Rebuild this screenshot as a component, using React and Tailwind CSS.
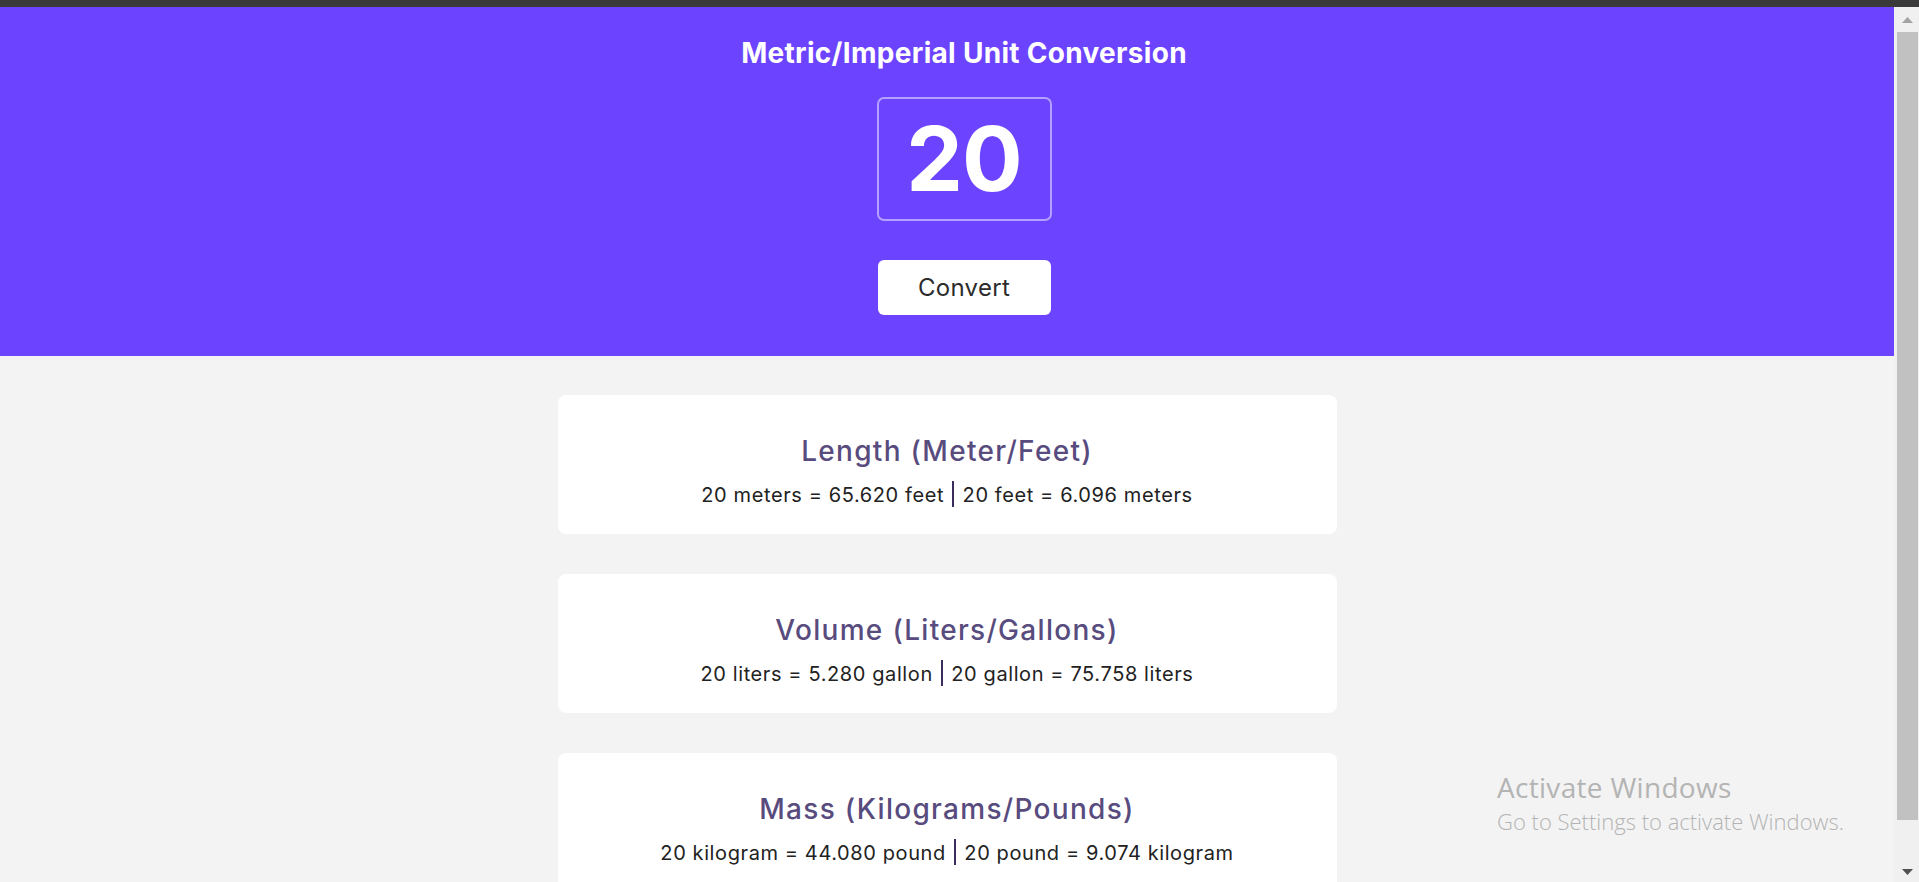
import React from "react";

const cards = [
  {
    title: "Length (Meter/Feet)",
    a: "20 meters = 65.620 feet",
    b: "20 feet = 6.096 meters",
  },
  {
    title: "Volume (Liters/Gallons)",
    a: "20 liters = 5.280 gallon",
    b: "20 gallon = 75.758 liters",
  },
  {
    title: "Mass (Kilograms/Pounds)",
    a: "20 kilogram = 44.080 pound",
    b: "20 pound = 9.074 kilogram",
  },
];

export default function App() {
  return (
    <div
      className="relative h-[882px] w-full overflow-hidden bg-[#f3f3f3] flex flex-col"
      style={{ fontFamily: "Inter, 'Noto Sans', sans-serif" }}
    >
      <div className="h-[7px] w-full shrink-0 bg-[#3a3a3a]" />
      <div className="flex flex-1 min-h-0">
        <div className="flex-1 min-w-0 flex flex-col">
          <header className="h-[349px] shrink-0 bg-[#6c43ff] pl-[34px] flex flex-col items-center">
            <h1 className="mt-[29px] text-[28px] leading-[34px] font-bold text-white tracking-[0.3px]">
              Metric/Imperial Unit Conversion
            </h1>
            <div className="mt-[27px] w-[175px] h-[124px] rounded-[7px] border-2 border-[#b3a0ff] flex items-center justify-center">
              <span className="text-[90px] leading-none font-bold text-white tracking-[-1px]">20</span>
            </div>
            <button className="mt-[39px] w-[173px] h-[55px] rounded-[6px] bg-white text-[#2b2b2b] text-[24px] leading-none tracking-[0.3px]">
              Convert
            </button>
          </header>
          <main className="flex flex-col items-center pt-[39px] gap-[40px]">
            {cards.map((c) => (
              <section
                key={c.title}
                className="w-[779px] shrink-0 rounded-[8px] bg-white pt-[39px] pb-[25px] flex flex-col items-center"
              >
                <h2 className="text-[28px] leading-[34px] font-medium text-[#584b7e] tracking-[1.3px]">{c.title}</h2>
                <p className="mt-[13px] text-[20px] leading-[28px] text-[#222222] tracking-[0.6px]">
                  {c.a} <span className="inline-block align-[-5px] h-[26px] w-[2px] bg-[#3b2c5e] mx-[2px]" /> {c.b}
                </p>
              </section>
            ))}
          </main>
        </div>
        <div className="w-[25px] shrink-0 bg-[#f0f0f0] flex flex-col items-center pl-[2px]">
          <div className="h-[25px] w-full flex items-center justify-center">
            <svg width="11" height="6" viewBox="0 0 11 6">
              <path d="M5.5 0 L11 6 L0 6 Z" fill="#a3a3a3" />
            </svg>
          </div>
          <div className="h-[788px] w-[21px] bg-[#c1c1c1]" />
          <div className="flex-1 w-full flex items-end justify-center pb-[7px]">
            <svg width="11" height="6" viewBox="0 0 11 6">
              <path d="M0 0 L11 0 L5.5 6 Z" fill="#505050" />
            </svg>
          </div>
        </div>
      </div>
      <div
        className="absolute left-[1497px] top-[770px] text-[#b4b4b4]"
        style={{ fontFamily: "'Open Sans', 'Noto Sans', sans-serif" }}
      >
        <div className="text-[28px] leading-[34px] font-normal tracking-[0.3px]">Activate Windows</div>
        <div className="text-[22px] leading-[28px] mt-[3px] font-light">Go to Settings to activate Windows.</div>
      </div>
    </div>
  );
}
